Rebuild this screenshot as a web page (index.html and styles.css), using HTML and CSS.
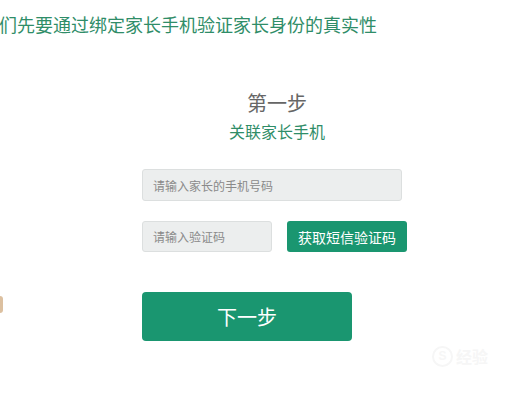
FILE: index.html
```html
<!DOCTYPE html>
<html lang="zh">
<head>
<meta charset="utf-8">
<link rel="stylesheet" href="styles.css">
</head>
<body>
<div class="page">
  <p class="intro">们先要通过绑定家长手机验证家长身份的真实性</p>
  <div class="form">
    <h2 class="step">第一步</h2>
    <p class="sub">关联家长手机</p>
    <div class="field wide">请输入家长的手机号码</div>
    <div class="row">
      <div class="field short">请输入验证码</div>
      <div class="sms">获取短信验证码</div>
    </div>
    <div class="next">下一步</div>
  </div>
  <div class="tab"></div>
  <div class="mark"><span class="mark-s">S</span><span class="mark-t">经验</span></div>
</div>
</body>
</html>
```
FILE: styles.css
```css
html, body {
  margin: 0;
  padding: 0;
  background: #ffffff;
}
body {
  font-family: "Noto Sans CJK SC", "Microsoft YaHei", sans-serif;
  width: 532px;
  height: 405px;
  overflow: hidden;
}
.page {
  position: relative;
  width: 532px;
  height: 405px;
  overflow: hidden;
}
.intro {
  margin: 0 0 0 -1px;
  font-size: 18px;
  line-height: 48px;
  color: #2f8d68;
  white-space: nowrap;
}
.form {
  margin-left: 142px;
  width: 270px;
  display: flex;
  flex-direction: column;
  align-items: flex-start;
}
.step {
  align-self: stretch;
  text-align: center;
  margin: 41px 0 0 0;
  font-size: 20px;
  font-weight: normal;
  line-height: 28px;
  color: #666666;
}
.sub {
  align-self: stretch;
  text-align: center;
  margin: 3px 0 0 0;
  font-size: 16px;
  line-height: 22px;
  color: #2f8d68;
}
.field {
  box-sizing: border-box;
  background: #eceeee;
  border: 1px solid #dcdfdf;
  border-radius: 3px;
  color: #8a8a8a;
  font-size: 12px;
  display: flex;
  align-items: center;
  padding-left: 10px;
}
.wide {
  width: 260px;
  height: 32px;
  margin-top: 27px;
}
.row {
  display: flex;
  gap: 15px;
  margin-top: 20px;
}
.short {
  width: 130px;
  height: 31px;
}
.sms {
  width: 120px;
  height: 31px;
  background: #1a9670;
  border-radius: 3px;
  color: #ffffff;
  font-size: 14px;
  display: flex;
  align-items: center;
  justify-content: center;
}
.next {
  margin-top: 40px;
  width: 210px;
  height: 49px;
  background: #1a9670;
  border-radius: 4px;
  color: #ffffff;
  font-size: 20px;
  display: flex;
  align-items: center;
  justify-content: center;
}
.tab {
  position: absolute;
  left: -6px;
  top: 296px;
  width: 9px;
  height: 17px;
  background: #dcc0a0;
  border-radius: 3px;
}
.mark {
  position: absolute;
  left: 432px;
  top: 344px;
  display: flex;
  align-items: center;
  gap: 3px;
  color: #f6f6f6;
}
.mark-s {
  width: 17px;
  height: 17px;
  border: 2px solid #f6f6f6;
  border-radius: 50%;
  font-family: "Liberation Sans", sans-serif;
  font-size: 12px;
  font-weight: bold;
  display: flex;
  align-items: center;
  justify-content: center;
}
.mark-t {
  font-size: 16px;
  font-weight: bold;
}
```
